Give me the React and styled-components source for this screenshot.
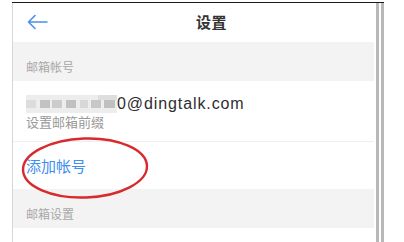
import React from "react";
import styled, { createGlobalStyle } from "styled-components";

const GlobalStyle = createGlobalStyle`
  body {
    margin: 0;
    background: #fff;
    font-family: "Noto Sans CJK SC", "Liberation Sans", sans-serif;
  }
`;

const Frame = styled.div`
  display: flex;
  width: 372px;
  height: 240px;
  margin: 2px 0 0 12px;
  border-top: 1.5px solid #1a1a1a;
  gap: 2px;
  .rail {
    width: 3px;
    background: #b8b8b8;
  }
`;

const Screen = styled.div`
  position: relative;
  width: 363px;
  border-left: 1px solid #d6d6d6;
  display: flex;
  flex-direction: column;
`;

const Header = styled.div`
  display: flex;
  align-items: center;
  height: 39px;
  padding-left: 14px;
  padding-bottom: 2px;
  box-sizing: border-box;
  .title {
    margin-left: 148px;
    font-size: 15px;
    font-weight: 700;
    color: #333;
    letter-spacing: 0.5px;
  }
`;

const SectionLabel = styled.div`
  box-sizing: border-box;
  height: 39px;
  padding: 17px 13px 0;
  background: #f3f3f3;
  font-size: 12px;
  line-height: 16px;
  color: #a8a8a8;
`;

const EmailRow = styled.div`
  box-sizing: border-box;
  height: 61px;
  padding: 13px 13px 0;
  border-bottom: 1px solid #efefef;
  .address {
    display: flex;
    align-items: center;
    height: 20px;
    font-family: "Liberation Sans", sans-serif;
    font-size: 16px;
    letter-spacing: 0.9px;
    color: #2e2e2e;
  }
  .hint {
    margin-top: -1px;
    font-size: 13px;
    line-height: 18px;
    color: #9a9a9a;
  }
`;

const AddRow = styled.div`
  box-sizing: border-box;
  height: 47px;
  padding: 14px 13px 0;
  font-size: 15px;
  line-height: 20px;
  color: #3f8ff0;
`;

const Circle = styled.svg`
  position: absolute;
  left: 3px;
  top: 131px;
`;

const Mosaic = () => (
  <svg width="91" height="18" viewBox="0 0 91 18">
    <rect x="0" y="0" width="91" height="18" fill="#ededed" />
    <rect x="0" y="5" width="10" height="8" fill="#dcdcdc" />
    <rect x="14" y="5" width="10" height="8" fill="#c2c2c2" />
    <rect x="26" y="5" width="10" height="8" fill="#cccccc" />
    <rect x="40" y="5" width="10" height="8" fill="#c0c0c0" />
    <rect x="54" y="5" width="8" height="8" fill="#d8d8d8" />
    <rect x="65" y="5" width="10" height="8" fill="#c8c8c8" />
    <rect x="78" y="5" width="11" height="8" fill="#c0c0c0" />
    <rect x="72" y="0" width="19" height="5" fill="#dedede" />
  </svg>
);

export default function App() {
  return (
    <>
      <GlobalStyle />
      <Frame>
        <Screen>
          <Header>
            <svg width="21" height="16" viewBox="0 0 21 16" fill="none" stroke="#4a8fe8" strokeWidth="1.6" strokeLinecap="round" strokeLinejoin="round">
              <path d="M20 8H1.5M8 1.5L1.5 8L8 14.5" />
            </svg>
            <span className="title">设置</span>
          </Header>
          <SectionLabel>邮箱帐号</SectionLabel>
          <EmailRow>
            <div className="address">
              <Mosaic />
              <span>0@dingtalk.com</span>
            </div>
            <div className="hint">设置邮箱前缀</div>
          </EmailRow>
          <AddRow>添加帐号</AddRow>
          <SectionLabel>邮箱设置</SectionLabel>
          <Circle width="138" height="68" viewBox="0 0 138 68">
            <ellipse cx="69" cy="34" rx="62" ry="29.5" fill="none" stroke="#d82a2e" strokeWidth="2.4" transform="rotate(-2 69 34)" />
          </Circle>
        </Screen>
        <div className="rail" />
        <div className="rail" />
      </Frame>
    </>
  );
}
